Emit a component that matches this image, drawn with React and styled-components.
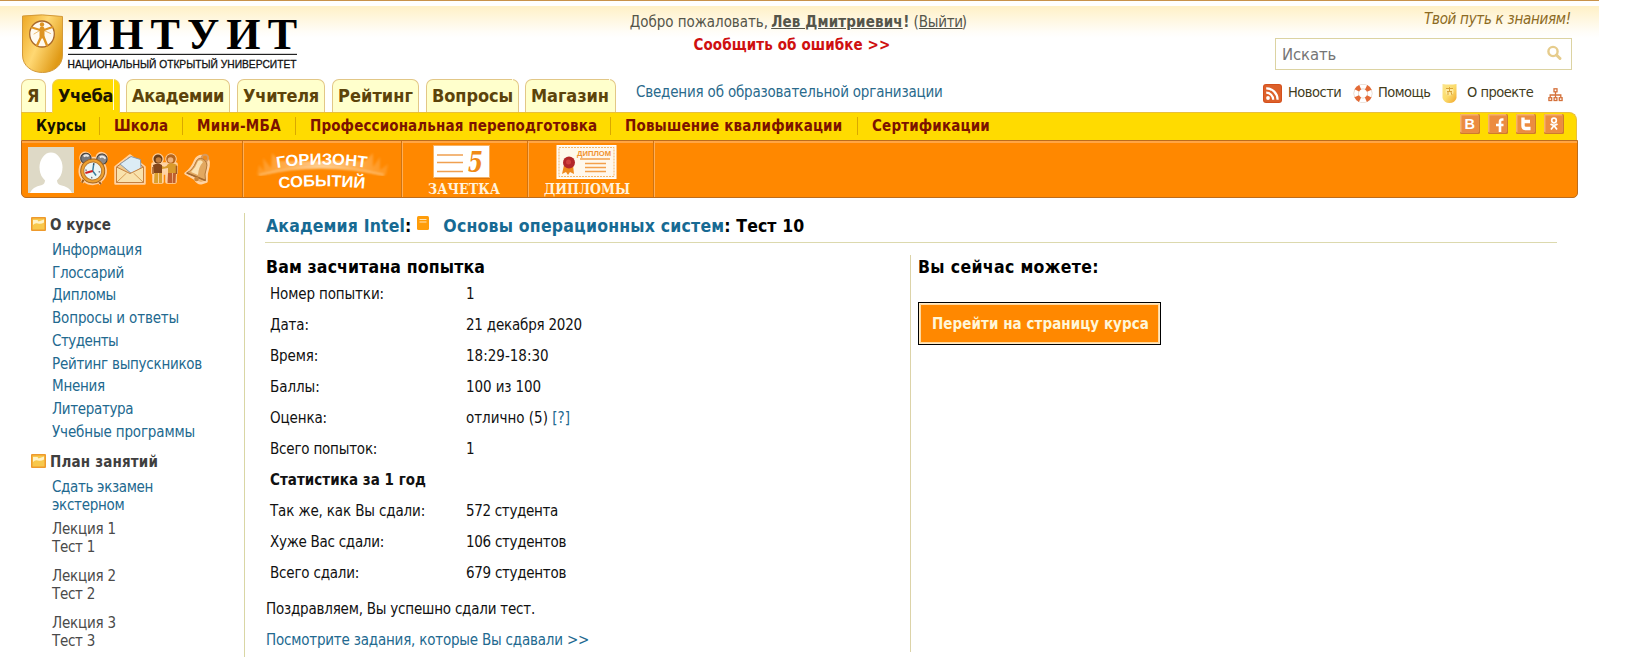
import React from "react";
import styled, { createGlobalStyle } from "styled-components";

const GlobalStyle = createGlobalStyle`
  * { box-sizing: border-box; }
  body { margin: 0; background: #fff; font-family: "DejaVu Sans Condensed", "DejaVu Sans", Tahoma, sans-serif; font-stretch: condensed; font-size: 15px; color: #111; }
  a { text-decoration: none; color: inherit; }
  svg { display: block; flex: none; overflow: visible; }
`;

const T = styled.span`
  display: inline-block;
  width: ${(p) => p.$w}px;
  letter-spacing: ${(p) => p.$ls || 0}px;
  text-decoration: ${(p) => (p.$underline ? "underline" : "inherit")};
  white-space: nowrap;
`;

const Page = styled.div`
  width: 1599px;
  height: 657px;
  overflow: hidden;
  border-top: 1px solid #c8924a;
  background: linear-gradient(#fff0c6, #fffdf8 26px, #fff) 0 5px / 100% 32px no-repeat;
`;
const Header = styled.header`
  display: grid;
  grid-template-columns: 1fr auto 1fr;
  height: 78px;
  padding: 0 27px 0 21px;
`;
const Logo = styled.a` padding-top: 13px; `;
const Welcome = styled.div`
  display: flex;
  flex-direction: column;
  align-items: center;
  padding: 10px 0 0 4px;
  color: #55554a;
  line-height: 23px;
`;
const ReportError = styled.a`
  margin-right: 13px;
  color: #cf1010;
  font-weight: bold;
`;
const HeaderRight = styled.div`
  display: flex;
  flex-direction: column;
  align-items: flex-end;
`;
const Slogan = styled.i`
  padding-top: 8px;
  height: 37px;
  line-height: 21px;
  color: #8c6a22;
`;
const Search = styled.label`
  display: flex;
  justify-content: space-between;
  width: 297px;
  height: 32px;
  padding: 0 9px 0 6px;
  border: 1px solid #dcd3a2;
  background: #fff;
  color: #757575;
  font-size: 16.5px;
  line-height: 31px;
  svg { margin-top: 6px; }
`;
const TabRow = styled.div`
  display: flex;
  height: 33px;
  padding-left: 21px;
`;
const Tab = styled.a`
  position: relative;
  width: ${(p) => p.$width}px;
  height: ${(p) => (p.$active ? 34 : 33)}px;
  margin-right: ${(p) => p.$gap}px;
  padding-left: 5px;
  border: 1px solid ${(p) => (p.$active ? "#f0cf50" : "#e2c787")};
  border-bottom: 0;
  border-radius: 7px 7px 0 0;
  background: ${(p) => (p.$active ? "#ffdb00" : "#ffffcc")};
  color: ${(p) => (p.$active ? "#1c1400" : "#5c430a")};
  font-size: 18px;
  font-weight: bold;
  line-height: 31px;
  z-index: 1;
  ${(p) => p.$seam && `&::after { content: ""; position: absolute; right: 5px; top: -1px; width: 1px; height: ${p.$seam}px; background: #fffbe0; }`}
`;
const OrgLink = styled.a`
  padding-left: 20px;
  line-height: 26px;
  color: #2a6a8c;
`;
const QuickLinks = styled.div`
  display: flex;
  align-items: flex-start;
  margin-left: auto;
  padding: 5px 36px 0 0;
  font-size: 14.5px;
  line-height: 17px;
  color: #423c1c;
`;
const Quick = styled.a`
  display: flex;
  gap: ${(p) => p.$gap}px;
  margin-right: ${(p) => p.$after}px;
  padding-top: ${(p) => p.$drop || 0}px;
`;
const SubNav = styled.nav`
  display: flex;
  align-items: flex-start;
  width: 1556px;
  height: 28px;
  margin-left: 21px;
  border: 1px solid #e9bf3c;
  border-bottom: 0;
  border-radius: 0 8px 0 0;
  background: #ffdb00;
  font-weight: bold;
  line-height: 26px;
  color: #7c1200;
`;
const SubItem = styled.a`
  padding-left: 14px;
  width: ${(p) => p.$width}px;
  color: ${(p) => (p.$active ? "#141000" : "inherit")};
`;
const Divider = styled.i`
  width: 1px;
  height: 18px;
  margin-top: 4px;
  background: #d9a800;
`;
const Socials = styled.div`
  display: flex;
  gap: 8px;
  margin-left: auto;
  padding: 1px 12px 0 0;
`;
const ToolBar = styled.div`
  display: flex;
  width: 1557px;
  height: 58px;
  margin-left: 21px;
  border: 1px solid #bd6c1c;
  border-radius: 0 0 5px 5px;
  background: #ff8800;
  box-shadow: inset 0 2px 0 #ffa544;
`;
const Tool = styled.a`
  display: flex;
  width: ${(p) => p.$width}px;
  padding: ${(p) => p.$pad};
  border-right: 1px solid #cf7312;
  box-shadow: 1px 0 0 #ffae55;
`;
const IconRow = styled.div`
  display: flex;
  align-items: center;
  gap: 4.5px;
  height: 44px;
  padding-left: 3px;
`;
const Content = styled.div`
  display: flex;
  height: 459px;
`;
const Sidebar = styled.aside`
  width: 245px;
  margin-top: 15px;
  padding-left: 31px;
  border-right: 1px solid #d9d6a4;
`;
const SideTitle = styled.h3`
  display: flex;
  gap: 4px;
  align-items: flex-start;
  height: 24px;
  margin: ${(p) => p.$top}px 0 0;
  font-size: 15px;
  line-height: 21px;
  color: #3f3f3f;
  svg { margin-top: 2px; }
`;
const SideList = styled.div`
  display: flex;
  flex-direction: column;
  padding-left: 21px;
  line-height: ${(p) => p.$lh}px;
  color: ${(p) => (p.$plain ? "#4a4a4a" : "#22698f")};
  margin-top: ${(p) => p.$top || 0}px;
`;
const Main = styled.main`
  width: 1292px;
  margin-left: 20px;
`;
const Title = styled.h1`
  display: flex;
  height: 45px;
  margin: 0;
  padding: 16px 0 0 1px;
  border-bottom: 1px solid #dcd9ae;
  font-size: 17.5px;
  line-height: 24px;
  color: #000;
  a { color: #176a93; }
  svg { margin: 2px 14px 0 6px; }
`;
const Columns = styled.div` display: flex; `;
const Result = styled.section`
  flex: none;
  width: 645px;
  padding: 12px 0 0 1px;
`;
const H2 = styled.h2`
  margin: 0;
  font-size: 17.5px;
  line-height: 24px;
  color: #000;
`;
const Rows = styled.div` padding: 4px 0 1px 4px; `;
const Row = styled.div`
  display: grid;
  grid-template-columns: 196px 1fr;
  height: 31px;
  line-height: 23px;
  font-weight: ${(p) => (p.$bold ? "bold" : "normal")};
  a { color: #22698f; }
`;
const Para = styled.p`
  margin: 0;
  height: 31px;
  line-height: 31px;
  color: ${(p) => (p.$link ? "#22698f" : "#111")};
`;
const Next = styled.section`
  flex: 1;
  height: 397px;
  margin-top: 12px;
  padding-left: 7px;
  border-left: 1px solid #dcd3a8;
`;
const Button = styled.button`
  display: block;
  width: 243px;
  height: 43px;
  margin-top: 23px;
  padding: 0 0 0 12px;
  border: 2px solid #ffe9c4;
  outline: 1px solid #000;
  outline-offset: -1px;
  background: #ff8800;
  box-shadow: inset 0 0 0 1px #ffd9a0;
  color: #fff6d8;
  font: bold 15px "DejaVu Sans Condensed", "DejaVu Sans", sans-serif;
  text-align: left;
`;

const ShieldLogo = () => (
  <svg width="278" height="60" viewBox="0 0 278 60">
    <defs>
      <linearGradient id="sh" x1="0" y1="0" x2="1" y2="0.6">
        <stop offset="0" stopColor="#eda723" /><stop offset=".5" stopColor="#ffd873" /><stop offset="1" stopColor="#e09a16" />
      </linearGradient>
    </defs>
    <path d="M1.500 2Q21-.5 41.500 2.500V41C41.500 52 32 58.500 21.500 58.500S1.500 52 1.500 41Z" fill="url(#sh)" stroke="#d39a3a" strokeWidth="1" />
    <ellipse cx="21" cy="20" rx="12.3" ry="13" fill="#fffaf0" stroke="#a8682a" strokeWidth="1.300" />
    <g stroke="#de9422" fill="none" strokeLinecap="round">
      <circle cx="21" cy="10.500" r="2.200" fill="#de9422" stroke="none" />
      <path d="M11 13.500L19 16M31.500 13L23 16" strokeWidth="2" />
      <path d="M21 15V22" strokeWidth="5" />
      <path d="M20 23L16 31.500M22.500 23L26 31.500" strokeWidth="2.400" />
      <path d="M13 20L18 17M29.500 19.500L24 17" strokeWidth="1" opacity=".6" />
    </g>
    <text x="47" y="35" textLength="229" lengthAdjust="spacing" fontFamily="Liberation Serif" fontWeight="bold" fontSize="44" fill="#000">ИНТУИТ</text>
    <rect x="47" y="39.800" width="229" height="1.200" fill="#222" />
    <text x="46.500" y="53.500" textLength="229" lengthAdjust="spacingAndGlyphs" fontFamily="Liberation Sans" fontSize="11" fill="#111" stroke="#111" strokeWidth=".3">НАЦИОНАЛЬНЫЙ ОТКРЫТЫЙ УНИВЕРСИТЕТ</text>
  </svg>
);
const SearchIcon = () => (
  <svg width="16" height="16" viewBox="0 0 16 16" fill="none" stroke="#e6cc8c">
    <circle cx="7" cy="6.500" r="4.600" strokeWidth="2.400" /><path d="M10.500 10L14 13.500" strokeWidth="3" strokeLinecap="round" />
  </svg>
);
const Rss = () => (
  <svg width="19" height="19" viewBox="0 0 19 19">
    <rect width="19" height="19" rx="3" fill="#d4501c" /><rect x="1" y="1" width="17" height="17" rx="2" fill="#dd602a" />
    <circle cx="5" cy="14" r="1.900" fill="#fff" />
    <path d="M3.200 8.700A7 7 0 0 1 10.200 15.700M3.200 4.300A11.400 11.400 0 0 1 14.600 15.700" fill="none" stroke="#fff" strokeWidth="2.200" />
  </svg>
);
const Ring = () => (
  <svg width="20" height="19" viewBox="0 0 20 19" fill="none">
    <circle cx="10" cy="9.500" r="6.900" stroke="#dfcabb" strokeWidth="5.200" />
    <circle cx="10" cy="9.500" r="6.900" stroke="#fff" strokeWidth="4" />
    <circle cx="10" cy="9.500" r="6.900" stroke="#e46a36" strokeWidth="5" strokeDasharray="4.800 6.038" strokeDashoffset="-3" />
  </svg>
);
const SmallShield = () => (
  <svg width="15" height="19" viewBox="0 0 15 19">
    <defs><linearGradient id="ss" x1="0" y1="0" x2="1" y2="1"><stop offset="0" stopColor="#fbe58c" /><stop offset=".5" stopColor="#fbdc6c" /><stop offset="1" stopColor="#f1a62b" /></linearGradient></defs>
    <path d="M.5 0Q7.500 1 14.500 0V14Q13 19 7.500 19T.5 14Z" fill="url(#ss)" />
    <circle cx="7.500" cy="7.500" r="4" fill="#fff0b4" opacity=".7" /><path d="M4 4.500H11M5 7.500H10M7.500 3V8M6 8V11M9 8L10 11" stroke="#d9a336" fill="none" />
  </svg>
);
const Sitemap = () => (
  <svg width="15" height="14" viewBox="0 0 15 14" fill="none" stroke="#d4703a" strokeWidth="1.300">
    <rect x="6" y=".8" width="3" height="3" /><path d="M7.500 4V9M2.200 9V7H12.800V9" />
    <rect x=".9" y="9.700" width="2.800" height="2.800" /><rect x="6.100" y="9.700" width="2.800" height="2.800" /><rect x="11.300" y="9.700" width="2.800" height="2.800" />
  </svg>
);
const Social = ({ children }) => (
  <svg width="20" height="20" viewBox="0 0 20 20">
    <rect width="20" height="20" rx="1.500" fill="#cf7a2c" /><rect width="18.500" height="18.500" rx="1" fill="#f7b26a" /><rect x="1.500" y="1.500" width="17" height="17" fill="#ec8c40" />
    {children}
  </svg>
);
const Avatar = () => (
  <svg width="46" height="46" viewBox="0 0 46 46">
    <rect width="46" height="46" fill="#ded9c6" />
    <ellipse cx="23" cy="20.500" rx="11.500" ry="15" fill="#fff" /><path d="M2 46Q4 40 14 38Q17 37 17 33H29Q29 37 32 38Q42 40 44 46Z" fill="#fff" />
  </svg>
);
const Clock = () => (
  <svg width="32" height="34" viewBox="0 0 32 34">
    <g transform="rotate(8 16 17)">
      <g stroke="#ffd0a0" strokeWidth="3.500"><circle cx="16" cy="19" r="12.500" fill="#ffd0a0" /><circle cx="7" cy="7" r="4.500" /><circle cx="23" cy="5" r="4.500" /><path d="M8 29L7 32M24 29L26 31" /></g>
      <circle cx="7.500" cy="7.500" r="5.200" fill="#77777a" stroke="#3d3b38" /><circle cx="23.500" cy="6" r="5.200" fill="#8b8888" stroke="#3d3b38" />
      <path d="M5 6Q7 3.500 10 5M21 4.500Q24 2 27 5" stroke="#e8e8e8" strokeWidth="2" fill="none" />
      <path d="M8 29L7 32M24 29L26 31" stroke="#9b5c1c" strokeWidth="2" />
      <circle cx="16" cy="19" r="12" fill="#eda02e" stroke="#a3641c" /><circle cx="16" cy="19" r="9" fill="#ecf6f5" stroke="#b9772b" />
      <path d="M16 11V19L20 23" stroke="#3b7d9c" fill="none" strokeWidth="1.500" /><path d="M16 19L9 22" stroke="#d32222" strokeWidth="2.200" />
      <path d="M16 11.500V13M23.500 19H22M16 26.500V25M8.500 19H10" stroke="#445" />
    </g>
  </svg>
);
const Mail = () => (
  <svg width="32" height="31" viewBox="0 0 32 31" strokeLinejoin="round">
    <path d="M1.500 13L16 1.500L30.500 13V29.500H1.500Z" fill="#ffd9ac" stroke="#ffd3a3" strokeWidth="2.500" />
    <path d="M2.500 13L16 3L29.500 13V28.500H2.500Z" fill="#f0c98c" stroke="#b9743c" />
    <path d="M6 10L17 2.500L26.500 5.500L27 14L18 20Z" fill="#dcecf5" stroke="#8a99a8" />
    <path d="M2.500 13L16 19.500L29.500 13V28.500H2.500Z" fill="#f9e2ac" stroke="#c4803f" /><path d="M3 28L12.500 19M29 28L19.500 19" stroke="#d69c55" />
  </svg>
);
const People = () => (
  <svg width="29" height="32" viewBox="0 0 29 32">
    <g fill="#ffd9ac" stroke="#ffd3a3" strokeWidth="3.500" strokeLinejoin="round"><circle cx="8" cy="6" r="4" /><circle cx="21" cy="6" r="4" /><rect x="3" y="11" width="23" height="9" /><rect x="4" y="17" width="8" height="12" /><rect x="17" y="17" width="8" height="12" /></g>
    <circle cx="8" cy="6" r="4.500" fill="#6b3d16" /><circle cx="8.500" cy="7" r="2.800" fill="#c47f3e" /><circle cx="21" cy="6" r="4.800" fill="#b5651c" /><circle cx="20.500" cy="7" r="2.800" fill="#efb27a" />
    <path d="M3 12Q8 9 12 12V20H4Z" fill="#844619" /><path d="M12 13Q16 15 18 11Q23 9 27 12L26 20H18V15L12 16Z" fill="#d99a2c" />
    <path d="M4.500 20H8V30H4ZM8.700 20H12V30H9Z" fill="#dba02d" /><path d="M18 20H22V30H17.500ZM22.700 20H26L25.500 30H22.500Z" fill="#c05e2c" />
    <path d="M3 14V21M26.500 13V21" stroke="#a05a22" strokeWidth="1.500" />
  </svg>
);
const Bell = () => (
  <svg width="28" height="32" viewBox="0 0 28 32">
    <path d="M1.500 20.500Q8 16 11 8Q13 3 18 3Q26 5 24.500 13Q22 20 22.500 28.500L18 30Q14 31 11 26Z" fill="#edb36c" stroke="#ffd3a3" strokeWidth="2.500" strokeLinejoin="round" />
    <circle cx="21" cy="5" r="3.200" fill="#f08a1c" stroke="#d99a5c" strokeWidth="2" />
    <path d="M2.500 20Q9 17 12 9Q14 4 19 6Q24 9 22.500 15Q20 21 21.500 27.500Z" fill="#e2a860" stroke="#b37a3c" /><path d="M7 19Q12 14 14 8Q17 6 19 9Q14.500 14 14 22Z" fill="#fbe3b4" />
    <path d="M3 20L21.500 27.500" stroke="#a4692f" strokeWidth="1.500" /><circle cx="12.500" cy="26" r="2.300" fill="#c9853a" />
  </svg>
);
const Horizon = () => (
  <svg width="158" height="56" viewBox="0 0 158 56">
    <defs>
      <radialGradient id="glow" gradientUnits="userSpaceOnUse" cx="78" cy="30" r="68"><stop offset="0" stopColor="#ffe9c8" stopOpacity=".75" /><stop offset=".6" stopColor="#ffc27a" stopOpacity=".55" /><stop offset="1" stopColor="#ffb55c" stopOpacity=".3" /></radialGradient>
      <filter id="soft"><feGaussianBlur stdDeviation=".9" /></filter>
      <path id="arcTop" d="M34 27Q78 20 125 27" /><path id="arcBottom" d="M36 47.500Q78 43 122 47.500" />
    </defs>
    <path d="M14 34L16 24L21 30L20 17L28 27L29 12L36 20H122L130 12L130 26L137 16L137 29L145 23L143 34Q78 20 14 34Z" fill="url(#glow)" filter="url(#soft)" />
    <path d="M16 34Q78 19 141 34" stroke="#ffe3bb" strokeWidth="1.500" fill="none" opacity=".7" filter="url(#soft)" />
    <g fill="#fff" fontFamily="Liberation Sans" fontWeight="bold" fontSize="16">
      <text textLength="90" lengthAdjust="spacingAndGlyphs"><textPath href="#arcTop" textLength="90" lengthAdjust="spacingAndGlyphs">ГОРИЗОНТ</textPath></text>
      <text textLength="86" lengthAdjust="spacingAndGlyphs"><textPath href="#arcBottom" textLength="86" lengthAdjust="spacingAndGlyphs">СОБЫТИЙ</textPath></text>
    </g>
  </svg>
);
const GradeBook = () => (
  <svg width="74" height="56" viewBox="0 0 74 56">
    <rect x="7" y="6" width="55" height="32" fill="#c96d10" opacity=".6" /><rect x="5.500" y="4.500" width="56" height="32" fill="#fff" stroke="#f6b365" />
    <path d="M9 14H35M9 21.500H35M9 30.500H35" stroke="#f0a050" strokeWidth="1.500" />
    <text x="40" y="30.500" fontFamily="DejaVu Serif" fontStyle="italic" fontWeight="bold" fontSize="28" textLength="15" lengthAdjust="spacingAndGlyphs" fill="#f08a16">5</text>
    <text x="0" y="53" fontFamily="DejaVu Serif" fontWeight="bold" fontSize="15" textLength="72" lengthAdjust="spacingAndGlyphs" fill="#fff2dc">ЗАЧЕТКА</text>
  </svg>
);
const Diploma = () => (
  <svg width="88" height="56" viewBox="0 0 88 56">
    <rect x="13" y="4.500" width="59" height="33" fill="#fff8ec" stroke="#fff" strokeWidth="1" /><rect x="15" y="6.500" width="55" height="29" fill="none" stroke="#f5b76b" strokeDasharray="2 1" />
    <text x="33" y="15" fontFamily="Liberation Sans" fontWeight="bold" fontSize="8" textLength="34" lengthAdjust="spacingAndGlyphs" fill="#f09332">ДИПЛОМ</text>
    <path d="M36 18H66M41 22.500H62M41 26.500H62M41 30.500H62" stroke="#f3a04b" strokeWidth="1.300" />
    <path d="M20 24L18 33L22 31L24 34L26 31L30 33L29 24Z" fill="#ef8a1c" /><circle cx="25" cy="21.500" r="6" fill="#b3262a" /><circle cx="24.500" cy="21" r="2.500" fill="#d0403e" />
    <text x="0" y="53" fontFamily="DejaVu Serif" fontWeight="bold" fontSize="15" textLength="86" lengthAdjust="spacingAndGlyphs" fill="#fff2dc">ДИПЛОМЫ</text>
  </svg>
);
const Folder = () => (
  <svg width="15" height="14" viewBox="0 0 15 14">
    <rect width="15" height="14" rx="1" fill="#ee9a2c" /><rect x="1.500" y="1.500" width="12" height="11" fill="#f8c84c" />
    <path d="M2 3H6.500L7.500 4.500L13 2.500V5.500Q10 7.500 7 6.500T2 8Z" fill="#fff3c8" />
  </svg>
);
const Book = () => (
  <svg width="12" height="14" viewBox="0 0 12 14">
    <rect width="12" height="14" rx="1.500" fill="#ff9d0a" /><path d="M2.500 3.500H9.500M2.500 6H9.500" stroke="#ffe6b8" strokeWidth="1.200" />
  </svg>
);

const tabs = [
  ["Я", 25, 6, 13, 0], ["Учеба", 68, 6, 55, -0.37, 31], ["Академии", 104, 7, 92, -0.31], ["Учителя", 88, 7, 76, -0.23], ["Рейтинг", 87, 7, 75, 0.06], ["Вопросы", 93, 6, 81, -0.09, 2], ["Магазин", 91, 0, 78, -0.06, 2],
];
const subnav = [
  ["Курсы", 77, 50, 0.06], ["Школа", 82, 54, 0], ["Мини-МБА", 112, 84, 0.32], ["Профессиональная переподготовка", 314, 287, 0.13], ["Повышение квалификации", 246, 217, 0.17], ["Сертификации", 150, 118, 0.16],
];
const courseLinks = [
  ["Информация", 90, -0.2], ["Глоссарий", 72, -0.26], ["Дипломы", 64, -0.27], ["Вопросы и ответы", 127, -0.15], ["Студенты", 66, -0.5], ["Рейтинг выпускников", 150, -0.26], ["Мнения", 53, -0.25], ["Литература", 81, -0.33], ["Учебные программы", 143, -0.15],
];
const rows = [
  { label: ["Номер попытки:", 114, -0.12], value: ["1", 8, 0] },
  { label: ["Дата:", 39, -0.1], value: ["21 декабря 2020", 116, -0.21] },
  { label: ["Время:", 48, -0.16], value: ["18:29-18:30", 83, 0] },
  { label: ["Баллы:", 50, -0.05], value: ["100 из 100", 75, -0.1] },
  { label: ["Оценка:", 57, -0.13], value: ["отлично (5)", 82, 0], help: true },
  { label: ["Всего попыток:", 107, -0.2], value: ["1", 8, 0] },
  { label: ["Статистика за 1 год", 156, 0.04] },
  { label: ["Так же, как Вы сдали:", 155, -0.14], value: ["572 студента", 92, -0.32] },
  { label: ["Хуже Вас сдали:", 114, -0.28], value: ["106 студентов", 100, -0.29] },
  { label: ["Всего сдали:", 89, -0.2], value: ["679 студентов", 100, -0.29] },
];

export default function App() {
  return (
    <>
      <GlobalStyle />
      <Page>
        <Header>
          <Logo><ShieldLogo /></Logo>
          <Welcome>
            <div>
              <T $w={137} $ls={-0.05}>Добро пожаловать,</T> <b><T $w={132} $ls={0.15} $underline>Лев Дмитриевич</T>!</b> (<T $w={43} $ls={-0.3} $underline>Выйти</T>)
            </div>
            <ReportError><T $w={197} $ls={0.1}>Сообщить об ошибке &gt;&gt;</T></ReportError>
          </Welcome>
          <HeaderRight>
            <Slogan><T $w={148} $ls={-0.28}>Твой путь к знаниям!</T></Slogan>
            <Search><T $w={54} $ls={-0.1}>Искать</T><SearchIcon /></Search>
          </HeaderRight>
        </Header>
        <TabRow>
          {tabs.map(([t, w, g, tw, ls, seam]) => (
            <Tab key={t} $width={w} $gap={g} $active={t === "Учеба"} $seam={seam}><T $w={tw} $ls={ls}>{t}</T></Tab>
          ))}
          <OrgLink><T $w={307} $ls={-0.19}>Сведения об образовательной организации</T></OrgLink>
          <QuickLinks>
            <Quick $gap={6} $after={12}><Rss /><T $w={53} $ls={-0.5}>Новости</T></Quick>
            <Quick $gap={5} $after={12}><Ring /><T $w={52} $ls={-0.55}>Помощь</T></Quick>
            <Quick $gap={10} $after={15}><SmallShield /><T $w={66} $ls={-0.5}>О проекте</T></Quick>
            <Quick $drop={4}><Sitemap /></Quick>
          </QuickLinks>
        </TabRow>
        <SubNav>
          {subnav.map(([t, w, tw, ls], i) => (
            <React.Fragment key={t}>
              {i > 0 && <Divider />}
              <SubItem $width={w} $active={i === 0}><T $w={tw} $ls={ls}>{t}</T></SubItem>
            </React.Fragment>
          ))}
          <Socials>
            <Social><text x="4.500" y="15" fontFamily="Liberation Sans" fontWeight="bold" fontSize="14.500" fill="#fff">В</text></Social>
            <Social><path d="M15.500 5.500H14Q12 5.500 12 8V18M8 11H15.500" stroke="#fff" strokeWidth="2.600" fill="none" /></Social>
            <Social><path d="M7 3.500V12Q7 14.500 10 14.500H14.500M7 7.500H14" stroke="#fff" strokeWidth="3.400" fill="none" /></Social>
            <Social><g stroke="#fff" strokeWidth="1.700" fill="none"><circle cx="10" cy="6.500" r="2.300" /><path d="M6.500 10Q10 12.500 13.500 10M10 11.500L7 15.500M10 11.500L13 15.500" /></g></Social>
          </Socials>
        </SubNav>
        <ToolBar>
          <Tool as="div" $width={221} $pad="6px 0 0 6px">
            <Avatar />
            <IconRow><Clock /><Mail /><People /><Bell /></IconRow>
          </Tool>
          <Tool $width={159} $pad="0"><Horizon /></Tool>
          <Tool $width={126} $pad="0 0 0 26px"><GradeBook /></Tool>
          <Tool $width={126} $pad="0 0 0 16px"><Diploma /></Tool>
        </ToolBar>
        <Content>
          <Sidebar>
            <SideTitle $top={2}><Folder /><T $w={61}>О курсе</T></SideTitle>
            <SideList $lh={22.7}>{courseLinks.map(([t, w, ls]) => <a key={t}><T $w={w} $ls={ls}>{t}</T></a>)}</SideList>
            <SideTitle $top={9}><Folder /><T $w={108} $ls={0.17}>План занятий</T></SideTitle>
            <SideList $lh={18} $top={2}><T $w={101} $ls={-0.34}>Сдать экзамен</T><T $w={72} $ls={-0.3}>экстерном</T></SideList>
            {[1, 2, 3].map((n) => (
              <SideList key={n} $lh={18} $plain $top={n === 1 ? 6 : 11}><T $w={64} $ls={-0.2}>Лекция {n}</T><T $w={43} $ls={-0.28}>Тест {n}</T></SideList>
            ))}
          </Sidebar>
          <Main>
            <Title>
              <a><T $w={139} $ls={0.14}>Академия Intel</T></a>:<Book /><a><T $w={281} $ls={0.2}>Основы операционных систем</T></a><T $w={80} $ls={0.1}>: Тест 10</T>
            </Title>
            <Columns>
              <Result>
                <H2><T $w={219} $ls={0.15}>Вам засчитана попытка</T></H2>
                <Rows>
                  {rows.map(({ label, value, help }) => (
                    <Row key={label[0]} $bold={!value}>
                      <T $w={label[1]} $ls={label[2]}>{label[0]}</T>
                      <span>{value && <T $w={value[1]} $ls={value[2]}>{value[0]}</T>}{help && <> <a>[?]</a></>}</span>
                    </Row>
                  ))}
                </Rows>
                <Para><T $w={269} $ls={-0.21}>Поздравляем, Вы успешно сдали тест.</T></Para>
                <Para $link><T $w={323} $ls={-0.2}>Посмотрите задания, которые Вы сдавали &gt;&gt;</T></Para>
              </Result>
              <Next>
                <H2><T $w={181} $ls={0.34}>Вы сейчас можете:</T></H2>
                <Button><T $w={217} $ls={0.06}>Перейти на страницу курса</T></Button>
              </Next>
            </Columns>
          </Main>
        </Content>
      </Page>
    </>
  );
}
